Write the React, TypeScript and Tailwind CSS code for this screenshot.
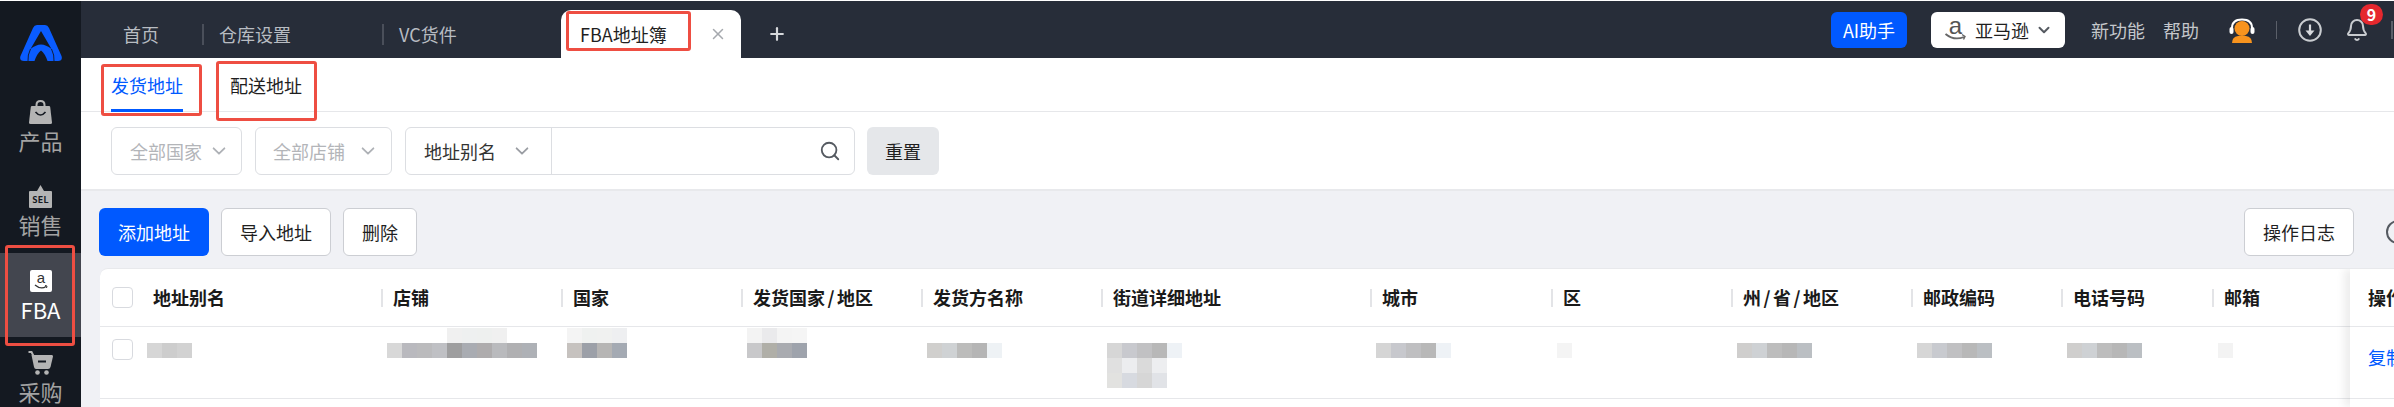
import React from "react";
import { ChevronDown, Plus, Search, X, Bell } from "lucide-react";

const Logo = () => (
  <svg width="42" height="36" viewBox="0 0 42 36">
    <path d="M0.5 31 L13 3 Q14.3 0 17 0 H25 Q27.7 0 29 3 L41.5 31 Q43 36 38 36 H4 Q-1 36 0.5 31 Z" fill="#0a5cff" />
    <path d="M21 6 L31.5 24 Q26 19.5 21 19.5 Q16 19.5 10.5 24 Z" fill="#141921" />
    <path d="M14.5 36 Q17 28.5 21 25.5 Q25 28.5 27.5 36 Z" fill="#141921" />
    <path d="M10.5 24 Q7.5 30 8 36" fill="none" stroke="#141921" strokeWidth="0.9" />
    <path d="M31.5 24 Q34.5 30 34 36" fill="none" stroke="#141921" strokeWidth="0.9" />
  </svg>
);

const BagIcon = () => (
  <svg width="23" height="24" viewBox="0 0 23 24">
    <path d="M7.5 7 V5 Q7.5 1 11.5 1 Q15.5 1 15.5 5 V7" fill="none" stroke="#b4b4b4" strokeWidth="2" />
    <path d="M3 6 H20 Q21 6 21.2 7 L23 22.5 Q23 24 21.5 24 H1.5 Q0 24 0 22.5 L1.8 7 Q2 6 3 6 Z" fill="#b4b4b4" />
    <path d="M6.5 12 Q11.5 18 16.5 12" fill="none" stroke="#141921" strokeWidth="1.6" />
  </svg>
);

const SelIcon = () => (
  <svg width="23" height="24" viewBox="0 0 23 24">
    <path d="M1 7 H8 L11.5 1 L15 7 H22 Q23 7 23 8 V23 Q23 24 22 24 H1 Q0 24 0 23 V8 Q0 7 1 7 Z" fill="#b4b4b4" />
    <text x="11.5" y="19" textAnchor="middle" fontSize="9" fontWeight="700" fill="#141921" fontFamily="'DejaVu Sans Mono', monospace">SEL</text>
  </svg>
);

const AmazonSquare = () => (
  <svg width="22" height="22" viewBox="0 0 22 22">
    <rect width="22" height="22" rx="2" fill="#ffffff" />
    <text x="11" y="13" textAnchor="middle" fontSize="15" fill="#333333" fontFamily="'Liberation Sans', sans-serif">a</text>
    <path d="M5 15 Q11 20 16 16.5" fill="none" stroke="#333333" strokeWidth="1.3" />
    <path d="M15 15.5 L17 16 L16.5 18" fill="none" stroke="#333333" strokeWidth="1" />
  </svg>
);

const CartIcon = () => (
  <svg width="25" height="24" viewBox="0 0 25 24">
    <path d="M0.5 1 H3.5 L6 6" fill="none" stroke="#b4b4b4" strokeWidth="2" />
    <path d="M3.5 4 H24 Q25 4 25 5.5 L22.5 16 Q22 18 20 18 H8 Q6.5 18 6 16 Z" fill="#b4b4b4" />
    <rect x="10" y="9.5" width="8" height="2" fill="#141921" />
    <circle cx="9.5" cy="21.5" r="2.3" fill="#b4b4b4" />
    <circle cx="18.5" cy="21.5" r="2.3" fill="#b4b4b4" />
  </svg>
);

const AmazonGlyph = () => (
  <svg width="21" height="20" viewBox="0 0 21 20" className="overflow-visible">
    <text x="10.5" y="14" textAnchor="middle" fontSize="24" fill="#555555" fontFamily="'Liberation Sans', sans-serif">a</text>
    <path d="M0.5 14 Q9 21 19 17" fill="none" stroke="#666666" strokeWidth="1.8" />
    <path d="M17 14.5 L20 16.5 L18.5 19.5" fill="none" stroke="#666666" strokeWidth="1.4" />
  </svg>
);

const Headset = () => (
  <svg width="26" height="25" viewBox="0 0 26 25">
    <path d="M3 13 V10 Q3 1.5 13 1.5 Q23 1.5 23 10 V13" fill="none" stroke="#ffffff" strokeWidth="2" />
    <rect x="0.5" y="9" width="4" height="7" rx="2" fill="#ffffff" />
    <rect x="21.5" y="9" width="4" height="7" rx="2" fill="#ffffff" />
    <ellipse cx="13" cy="10.5" rx="7.5" ry="7.5" fill="#f7931e" />
    <path d="M3 25 Q3 19 9 18 H17 Q23 19 23 25 Z" fill="#f7931e" />
  </svg>
);

const DownCircle = () => (
  <svg width="24" height="24" viewBox="0 0 24 24">
    <circle cx="12" cy="12" r="10.8" fill="none" stroke="#c9ccd0" strokeWidth="2" />
    <path d="M12 6.5 V16" stroke="#d8dade" strokeWidth="2.2" />
    <path d="M7.5 12.5 L12 18 L16.5 12.5 Z" fill="#d8dade" />
  </svg>
);

type NavItem = { label: string; icon: React.ReactNode; active?: boolean; pad: string };
const nav: NavItem[] = [
  { label: "产品", icon: <BagIcon />, pad: "pt-[15px]" },
  { label: "销售", icon: <SelIcon />, pad: "pt-[15px]" },
  { label: "FBA", icon: <AmazonSquare />, active: true, pad: "pt-[16px]" },
  { label: "采购", icon: <CartIcon />, pad: "pt-[14px]" },
];

const Sidebar = () => (
  <aside className="w-[81px] shrink-0 bg-[#141921] flex flex-col items-stretch">
    <div className="h-[84px] shrink-0 pt-[24px] flex justify-center items-start">
      <Logo />
    </div>
    {nav.map((n) => (
      <div
        key={n.label}
        className={`h-[84px] shrink-0 flex flex-col items-center ${n.pad} ${n.active ? "bg-[#43464f]" : ""}`}
      >
        <div className="h-[24px] flex items-center">{n.icon}</div>
        <div className={`mt-[2px] text-[22px] leading-[28px] ${n.active ? "text-white" : "text-[#a3a3a3]"}`}>{n.label}</div>
      </div>
    ))}
  </aside>
);

const Divider = () => <span className="w-[2px] h-[21px] bg-[#4a4f5a] shrink-0" />;

const TopBar = () => (
  <header className="h-[57px] shrink-0 bg-[#272d39] flex text-[18px]">
    <div className="flex items-end self-end">
      <div className="w-[121px] h-[48px] flex items-center pl-[42px] text-[#b8bcc2]">首页</div>
      <div className="w-[180px] h-[48px] flex items-center text-[#b8bcc2]">
        <Divider />
        <span className="ml-[15px]">仓库设置</span>
      </div>
      <div className="w-[179px] h-[48px] flex items-center text-[#b8bcc2]">
        <Divider />
        <span className="ml-[15px]">VC货件</span>
      </div>
      <div className="w-[180px] h-[48px] bg-white rounded-t-[10px] flex items-center pl-[19px] text-[#1f1f1f]">
        <span className="w-[129px]">FBA地址簿</span>
        <X size={18} strokeWidth={2} className="text-[#a6a9ae]" />
      </div>
      <div className="h-[48px] flex items-center ml-[26px] text-[#d6d8db]">
        <Plus size={20} strokeWidth={2.6} />
      </div>
    </div>
    <div className="ml-auto flex items-center pt-px pr-[1px]">
      <div className="w-[76px] h-[36px] rounded-[6px] bg-[#0059ff] text-white flex items-center justify-center">AI助手</div>
      <div className="ml-[24px] w-[134px] h-[36px] rounded-[6px] bg-white flex items-center pl-[14px] text-[#1f1f1f]">
        <AmazonGlyph />
        <span className="ml-[9px]">亚马逊</span>
        <ChevronDown size={18} strokeWidth={2.6} className="ml-[6px] text-[#555a61]" />
      </div>
      <span className="ml-[26px] text-[#c4c7cb]">新功能</span>
      <span className="ml-[18px] text-[#c4c7cb]">帮助</span>
      <span className="ml-[30px] flex"><Headset /></span>
      <span className="ml-[21px] w-px h-[18px] bg-[#5a5f69]" />
      <span className="ml-[21px] flex"><DownCircle /></span>
      <span className="ml-[23px] relative flex">
        <Bell size={24} strokeWidth={2} className="text-[#c9ccd0]" />
        <span className="absolute left-[15px] top-[-14px] w-[23px] h-[21px] rounded-full bg-[#e5282e] text-white text-[16px] font-bold leading-[21px] text-center">9</span>
      </span>
      <span className="ml-[22px] w-[2px] h-[18px] bg-[#5a5f69]" />
    </div>
  </header>
);

const SubTabs = () => (
  <div className="h-[54px] shrink-0 bg-white border-b border-[#e6e7ea] flex pl-[30px] gap-[47px] text-[18px]">
    <div className="h-[54px] pt-[3px] border-b-[3px] border-[#0059ff] flex items-center text-[#0059ff]">发货地址</div>
    <div className="h-[54px] pt-[3px] border-b-[3px] border-transparent flex items-center text-[#1f1f1f]">配送地址</div>
  </div>
);

const FilterRow = () => (
  <div className="h-[79px] shrink-0 bg-white border-b-2 border-[#e8e9ec] flex items-start pt-[15px] pl-[30px] text-[18px]">
    <div className="w-[131px] h-[48px] rounded-[6px] border border-[#dcdee2] flex items-center pl-[18px] text-[#b3b5b9]">
      <span>全部国家</span>
      <ChevronDown size={24} strokeWidth={2} className="ml-[5px] text-[#aeb1b6] scale-[0.9]" />
    </div>
    <div className="ml-[13px] w-[137px] h-[48px] rounded-[6px] border border-[#dcdee2] flex items-center pl-[17px] text-[#b3b5b9]">
      <span>全部店铺</span>
      <ChevronDown size={24} strokeWidth={2} className="ml-[11px] text-[#aeb1b6] scale-[0.9]" />
    </div>
    <div className="ml-[13px] w-[450px] h-[48px] rounded-[6px] border border-[#dcdee2] flex items-center">
      <div className="w-[146px] h-full border-r border-[#dcdee2] flex items-center pl-[18px] text-[#333333]">
        <span>地址别名</span>
        <ChevronDown size={24} strokeWidth={2} className="ml-[14px] text-[#9a9da3] scale-[0.9]" />
      </div>
      <Search size={22} strokeWidth={2} className="ml-auto mr-[13px] text-[#555a61]" />
    </div>
    <div className="ml-[12px] w-[72px] h-[48px] rounded-[6px] bg-[#e5e7ea] flex items-center justify-center text-[#1f1f1f]">重置</div>
  </div>
);

const ActionRow = () => (
  <div className="h-[77px] shrink-0 flex items-start pt-[17px] pl-[18px] text-[18px]">
    <div className="w-[110px] h-[48px] rounded-[6px] bg-[#0059ff] text-white flex items-center justify-center">添加地址</div>
    <div className="ml-[12px] w-[110px] h-[48px] rounded-[6px] bg-white border border-[#ccced3] flex items-center justify-center text-[#1f1f1f]">导入地址</div>
    <div className="ml-[12px] w-[74px] h-[48px] rounded-[6px] bg-white border border-[#ccced3] flex items-center justify-center text-[#1f1f1f]">删除</div>
    <div className="ml-auto w-[110px] h-[48px] rounded-[6px] bg-white border border-[#ccced3] flex items-center justify-center text-[#1f1f1f]">操作日志</div>
    <div className="ml-[32px] mr-[-16px] mt-[12px] w-[24px] h-[24px] rounded-full border-[2px] border-[#555a61] shrink-0" />
  </div>
);

const columns = ["地址别名", "店铺", "国家", "发货国家/地区", "发货方名称", "街道详细地址", "城市", "区", "州/省/地区", "邮政编码", "电话号码", "邮箱"];

type Cell = { top?: string[]; rows: string[][] };
const cells: Cell[] = [
  { rows: [["#d6d6d6", "#cdcdcd", "#d2d2d2"]] },
  {
    top: ["", "", "", "", "#f0f0f0", "#eef0f0", "#eef0ef", "#f0f0f0"],
    rows: [["#d8d8d8", "#b9b9be", "#bbbbbd", "#bfc0c4", "#9e9e9f", "#a9acb2", "#aeacad", "#b9babd", "#b0b0b2", "#aeb1b6"]],
  },
  { top: ["#f4f4f4", "#eff1f0", "#f0f1f0", "#eeeff1"], rows: [["#c6c2bf", "#9ca0a8", "#b6b5b4", "#a4aab3"]] },
  { top: ["#f3f3f3", "#eaeaec", "#f4f4f4", "#f5f5f5"], rows: [["#c8c8ca", "#b0afa8", "#a9abb0", "#9ea3ac"]] },
  { rows: [["#d0cfcd", "#cfd2d4", "#bcbcbb", "#b5b5b5", "#eef2f5"]] },
  {
    rows: [
      ["#d6d6d6", "#c8c9ce", "#c1c1c3", "#b8b8b8", "#eef2f6"],
      ["#e0e0e0", "#ecedef", "#dadada", "#edeef0"],
      ["#e2e2e0", "#d7dae0", "#d6d6d6", "#e1e3e7"],
    ],
  },
  { rows: [["#d5d5d5", "#c7c8cd", "#bfbfc1", "#b8b8b8", "#eef2f6"]] },
  { rows: [["#f4f4f4"]] },
  { rows: [["#cfcecd", "#ced1d4", "#bdbdbd", "#b7b7b7", "#bbbfc3"]] },
  { rows: [["#d6d6d6", "#c8cacf", "#c0c0c2", "#b8b8b8", "#bbbfc3"]] },
  { rows: [["#cfcecd", "#ced1d4", "#bdbdbd", "#b7b7b7", "#bbbfc3"]] },
  { rows: [["#f3f3f3"]] },
];

const MosaicRow = ({ colors }: { colors: string[] }) => (
  <div className="flex h-[15px]">
    {colors.map((c, i) => (
      <span key={i} className="w-[15px] h-[15px]" style={{ backgroundColor: c || "transparent" }} />
    ))}
  </div>
);

const gridCols = "grid grid-cols-[281px_180px_180px_180px_180px_269px_181px_180px_180px_150px_151px_182px]";

const Checkbox = () => <span className="w-[21px] h-[21px] rounded-[4px] border border-[#d8dadf] bg-white shrink-0" />;

const HeaderLabel = ({ text }: { text: string }) => (
  <span className="ml-[10px] whitespace-nowrap">
    {text.split("/").map((part, i) => (
      <React.Fragment key={i}>
        {i > 0 && <span className="mx-[2.5px]">/</span>}
        {part}
      </React.Fragment>
    ))}
  </span>
);

const Table = () => (
  <div className="relative flex-1 ml-[19px] bg-white rounded-tl-[8px] border-t border-[#e8e9ec] overflow-hidden">
    <div className={`${gridCols} h-[58px] border-b-[1px] border-[#e6e7ea] items-center text-[18px] font-bold text-[#1a1a1a]`}>
      {columns.map((c, i) => (
        <div key={c} className="flex items-center h-[18px]">
          {i === 0 ? (
            <div className="flex items-center pl-[12px]">
              <Checkbox />
              <span className="ml-[20px]">{c}</span>
            </div>
          ) : (
            <>
              <span className="w-[2px] h-[18px] bg-[#e3e4e7] shrink-0" />
              <HeaderLabel text={c} />
            </>
          )}
        </div>
      ))}
    </div>
    <div className={`${gridCols} h-[72px] border-b border-[#e6e7ea]`}>
      {cells.map((cell, i) =>
        i === 0 ? (
          <div key={i} className="flex items-start pl-[12px] pt-[12px]">
            <Checkbox />
            <div className="ml-[14px] mt-[4px]">
              <MosaicRow colors={cell.rows[0]} />
            </div>
          </div>
        ) : (
          <div key={i} className={`pl-[6px] ${cell.top ? "pt-px" : "pt-[16px]"}`}>
            {cell.top && <MosaicRow colors={cell.top} />}
            {cell.rows.map((r, j) => (
              <MosaicRow key={j} colors={r} />
            ))}
          </div>
        )
      )}
    </div>
    <div className="absolute right-0 top-0 bottom-0 w-[44px] bg-white shadow-[-6px_0_8px_rgba(0,0,0,0.07)] whitespace-nowrap text-[18px]">
      <div className="h-[58px] flex items-center pl-[18px] font-bold text-[#1a1a1a] border-b border-[#e6e7ea]">操作</div>
      <div className="h-[72px] pt-[17px] pl-[18px] leading-[26px] text-[#0059ff] border-b border-[#e6e7ea]">复制</div>
    </div>
  </div>
);

export default function App() {
  return (
    <div className="relative w-[2394px] h-[407px] overflow-hidden bg-white pt-px flex font-['Noto_Sans_CJK_SC','Liberation_Sans',sans-serif]">
      <Sidebar />
      <main className="flex-1 min-w-0 flex flex-col bg-[#f0f1f5]">
        <TopBar />
        <SubTabs />
        <FilterRow />
        <ActionRow />
        <Table />
      </main>
      <div className="absolute left-[566px] top-[11px] w-[125px] h-[40px] border-[3px] border-[#ee4e42] rounded-[3px]" />
      <div className="absolute left-[101px] top-[64px] w-[101px] h-[52px] border-[3px] border-[#ee4e42] rounded-[3px]" />
      <div className="absolute left-[216px] top-[61px] w-[101px] h-[60px] border-[3px] border-[#ee4e42] rounded-[3px]" />
      <div className="absolute left-[5px] top-[245px] w-[70px] h-[101px] border-[3px] border-[#ee4e42] rounded-[3px]" />
    </div>
  );
}
